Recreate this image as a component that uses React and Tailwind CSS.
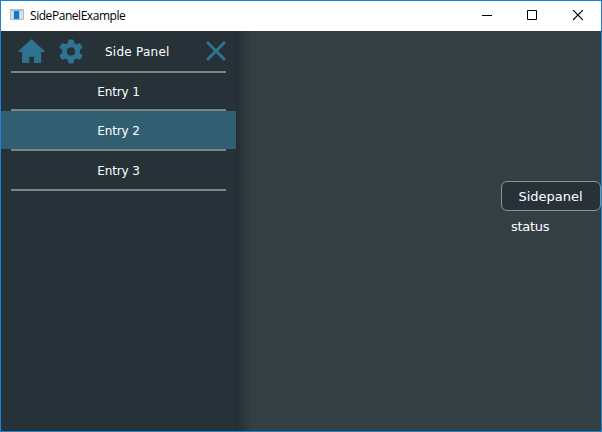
import React from "react";

const entries = [
  { label: "Entry 1", active: false, height: "h-[38px]" },
  { label: "Entry 2", active: true, height: "h-10" },
  { label: "Entry 3", active: false, height: "h-10" },
];

function AppIcon() {
  return (
    <svg width="14" height="11" viewBox="0 0 14 11" shapeRendering="crispEdges">
      <rect width="14" height="11" fill="#bdbdbd" />
      <rect x="1" y="2" width="12" height="8" fill="#dedede" />
      <rect x="4" y="2" width="5" height="8" fill="#0a7bd6" />
      <rect x="3" y="2" width="1" height="8" fill="#a9d3f2" />
      <rect x="9" y="2" width="1" height="8" fill="#a9d3f2" />
    </svg>
  );
}

function TitleBar() {
  return (
    <header className="flex h-[30px] shrink-0 items-center bg-white pl-[9px] text-black">
      <div className="-mt-[3px]"><AppIcon /></div>
      <h1 className="ml-[6px] font-['Open_Sans',sans-serif] text-[12px] leading-[16px] tracking-[-0.45px]">
        SidePanelExample
      </h1>
      <div className="-mt-px ml-auto flex items-center">
        <button aria-label="Minimize" className="flex h-[29px] w-[45px] items-center justify-center">
          <svg width="11" height="11" viewBox="0 0 11 11"><path d="M1 5.5H11" stroke="#000" /></svg>
        </button>
        <button aria-label="Maximize" className="flex h-[29px] w-[45px] items-center justify-center">
          <svg width="11" height="11" viewBox="0 0 11 11"><path d="M1.5 .5H10.5V9.5H1.5Z" fill="none" stroke="#000" /></svg>
        </button>
        <button aria-label="Close" className="flex h-[29px] w-[47px] items-center justify-center">
          <svg width="11" height="11" viewBox="0 0 11 11"><path d="M1 0 11 10M11 0 1 10" stroke="#000" strokeWidth="1.1" /></svg>
        </button>
      </div>
    </header>
  );
}

function HomeIcon() {
  return (
    <svg width="27" height="24" viewBox="0 0 27 24" fill="#2f7391" stroke="#2f7391" strokeLinejoin="round">
      <path d="M13.5 .9 26 12.4H22.4V23.2H16.6V17H10.6V23.2H4.8V12.4H1Z" strokeWidth="1.4" />
    </svg>
  );
}

function GearIcon() {
  return (
    <svg width="24" height="25" viewBox="0 0 24 25" fill="#2f7391">
      <path fillRule="evenodd" stroke="#2f7391" strokeLinejoin="round" strokeWidth="1" d="M9.9 1H14.1L14.9 4.4 17.4 5.8 20.9 4.7 23.2 8.6 20.3 11V14L23.2 16.4 20.9 20.3 17.4 19.2 14.9 20.6 14.1 24H9.9L9.1 20.6 6.6 19.2 3.1 20.3 .8 16.4 3.7 14V11L.8 8.6 3.1 4.7 6.6 5.8 9.1 4.4ZM12 7.8A4.7 4.7 0 1 0 12 17.2A4.7 4.7 0 1 0 12 7.8Z" />
    </svg>
  );
}

function SidePanel() {
  return (
    <aside className="w-[235px] shrink-0 bg-[#273238]">
      <div className="mx-[10px] flex h-[42px] items-center border-b-2 border-[#7b8487]">
        <button aria-label="Home" className="ml-[7px]"><HomeIcon /></button>
        <button aria-label="Settings" className="ml-[14px]"><GearIcon /></button>
        <span className="ml-[22px] pt-[2px] whitespace-nowrap text-[12px] leading-4 tracking-[0.25px]">Side Panel</span>
        <button aria-label="Close panel" className="ml-auto">
          <svg width="20" height="20" viewBox="0 0 20 20"><path d="M1 1 19 19M19 1 1 19" stroke="#2f7391" strokeWidth="2.8" /></svg>
        </button>
      </div>
      {entries.map((e) => (
        <div key={e.label} className={e.height + (e.active ? " bg-linear-to-b from-[#315f71] from-[38px] to-transparent to-[38px]" : "")}>
          <div className="mx-[10px] flex h-full items-center justify-center border-b-2 border-[#7b8487] pt-[2px] text-[12px] leading-4 tracking-[-0.15px]">
            {e.label}
          </div>
        </div>
      ))}
    </aside>
  );
}

export default function App() {
  return (
    <div className="flex h-[432px] w-[602px] flex-col overflow-hidden border border-[#1883d7] font-[Verdana,'DejaVu_Sans',sans-serif] text-white">
      <TitleBar />
      <div className="flex min-h-0 flex-1 bg-[#343f44]">
        <SidePanel />
        <main className="flex flex-1 items-start justify-end bg-linear-to-r from-[#242d33] to-[#343f44] to-[15px] pt-[150px]">
          <div className="w-[100px]">
            <button className="flex h-[30px] w-full items-center justify-center rounded-[6px] border border-[#8a9195] bg-[#273238] pt-px pr-px text-[13px]">
              Sidepanel
            </button>
            <p className="mt-[7px] ml-[10px] text-[13px] leading-[18px] tracking-[-0.3px]">status</p>
          </div>
        </main>
      </div>
    </div>
  );
}
